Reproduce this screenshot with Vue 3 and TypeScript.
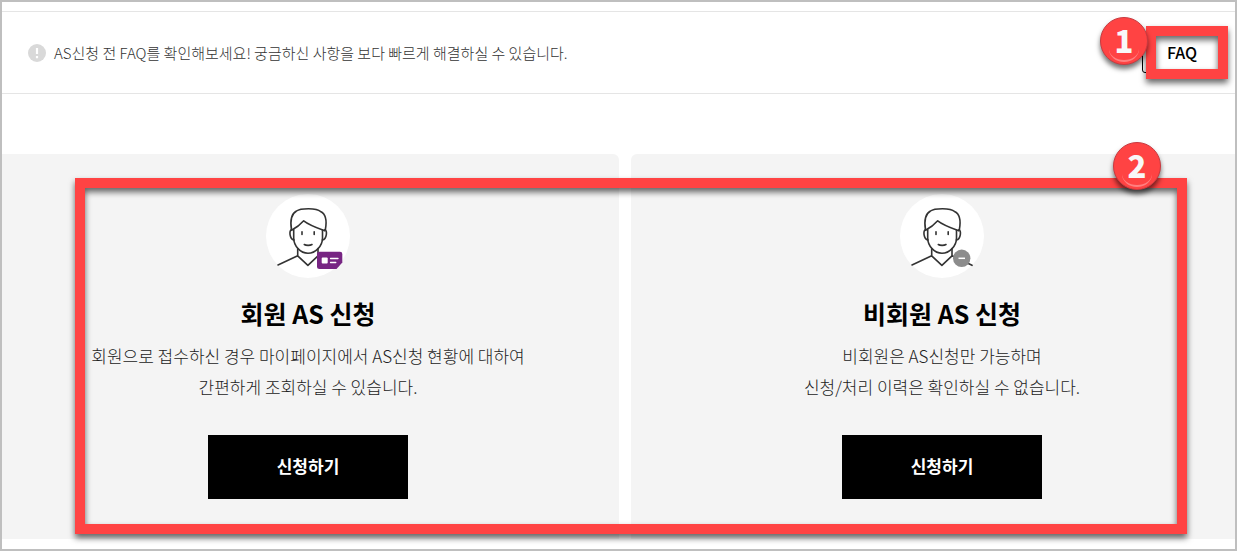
<script setup lang="ts">
interface ServiceCard {
  id: string
  title: string
  lines: string[]
  badge: 'member' | 'guest'
}

const cards: ServiceCard[] = [
  {
    id: 'member',
    title: '회원 AS 신청',
    lines: ['회원으로 접수하신 경우 마이페이지에서 AS신청 현황에 대하여', '간편하게 조회하실 수 있습니다.'],
    badge: 'member',
  },
  {
    id: 'guest',
    title: '비회원 AS 신청',
    lines: ['비회원은 AS신청만 가능하며', '신청/처리 이력은 확인하실 수 없습니다.'],
    badge: 'guest',
  },
]
</script>

<template>
  <main class="page">
    <section class="notice">
      <svg class="notice-icon" viewBox="0 0 18 18" aria-hidden="true">
        <circle cx="9" cy="9" r="9" fill="#d9d9d9" />
        <path d="M9 4V10M9 12v2.200" stroke="#fff" stroke-width="2.200" />
      </svg>
      <p class="notice-text">AS신청 전 FAQ를 확인해보세요! 궁금하신 사항을 보다 빠르게 해결하실 수 있습니다.</p>
      <div class="faq">
        <a class="faq-link" href="#faq">FAQ</a>
        <div class="mark-frame faq-frame"></div>
        <span class="mark-badge faq-badge">1</span>
      </div>
    </section>

    <section class="services">
      <div class="cards">
        <article v-for="card in cards" :key="card.id" class="card">
          <svg class="avatar" viewBox="0 0 84 84" aria-hidden="true">
            <circle cx="42" cy="42" r="42" fill="#fff" />
            <g fill="none" stroke="#333" stroke-width="1.6" stroke-linecap="round" stroke-linejoin="round">
              <path d="M25.5 36C24 27 25 20 30.500 17C33 15 37 14.700 42.500 14.700C48 14.700 52 15 54.500 17.500C60 20 61 27 59.300 36" />
              <path d="M25.500 36.300C30 34 34 31 37.700 26.800C43 31 50 33.500 58.800 36.800" />
              <path d="M27.700 35.500V44C27.700 52 34.500 59.300 42 59.300S56.500 52 56.500 44V36" />
              <path d="M25.500 35.800C23 36 23.300 45 28 46M58.800 35.800C61.500 36 61 45 56.400 46" />
              <path d="M31.700 54.500V61.800L12 71M31.700 61.800L41.900 71.300L52 61.800V54.500M52 61.800L72 71.300" />
              <path d="M36 37.800V40.500M48.200 37.800V40.500" />
              <path d="M38.300 50.500C40 51.600 44.200 51.600 46 50.500" />
            </g>
            <g v-if="card.badge === 'member'">
              <path d="M53.500 57.700H74Q76.300 57.700 76.300 60V68.500L70.500 75H53.500Q51 75 51 72.500V60.200Q51 57.700 53.500 57.700Z" fill="#772583" />
              <rect x="55.700" y="63.500" width="6" height="6" rx="1" fill="#fff" />
              <path d="M64.500 64.500H72M64.500 68.500H69.800" stroke="#fff" stroke-width="1.300" stroke-linecap="round" />
            </g>
            <g v-else>
              <circle cx="61.700" cy="64.300" r="8.700" fill="#8c8c8c" />
              <path d="M58.500 64.300H65" stroke="#fff" stroke-width="1.500" />
            </g>
          </svg>
          <h2 class="card-title">{{ card.title }}</h2>
          <p class="card-text">
            <span v-for="line in card.lines" :key="line" class="card-line">{{ line }}</span>
          </p>
          <button class="apply" type="button">신청하기</button>
        </article>
      </div>
      <div class="mark-frame services-frame"></div>
      <span class="mark-badge services-badge">2</span>
    </section>
  </main>
</template>

<style>
body {
  margin: 0;
}
</style>

<style scoped>
.page {
  box-sizing: border-box;
  padding: 9px 0 10px;
  overflow: hidden;
  border: 2px solid #bfbfbf;
  background: #fff;
  color: #000;
  font-family: "Noto Sans CJK KR", "Noto Sans", sans-serif;
}

.notice {
  display: flex;
  align-items: center;
  height: 81px;
  padding: 0 13px 0 26px;
  border-top: 1px solid #e5e5e5;
  border-bottom: 1px solid #e5e5e5;
}

.notice-icon {
  width: 18px;
  height: 18px;
  margin-right: 8px;
}

.notice-text {
  flex: 1;
  margin: 0;
  color: #333;
  font-size: 15px;
  font-weight: 300;
  line-height: 24px;
}

.faq {
  position: relative;
}

.faq-link {
  display: block;
  box-sizing: border-box;
  width: 80px;
  padding-bottom: 2px;
  border: 1px solid #000;
  border-radius: 3px;
  color: #000;
  font-size: 16px;
  font-weight: 500;
  line-height: 36px;
  text-align: center;
  text-decoration: none;
}

.services {
  position: relative;
  margin-top: 60px;
}

.cards {
  display: grid;
  grid-template-columns: 1fr 1fr;
  gap: 12px;
  margin: 0 -18px 0 -5px;
}

.card {
  display: flex;
  flex-direction: column;
  align-items: center;
  padding: 40px 0;
  border-radius: 6px 6px 0 0;
  background: #f4f4f4;
}

.avatar {
  width: 84px;
  height: 84px;
}

.card-title {
  margin: 15px 0 0;
  font-size: 25px;
  font-weight: 700;
  line-height: 40px;
}

.card-text {
  margin: 7px 0 33px;
  color: #222;
  font-size: 17px;
  font-weight: 300;
  line-height: 31px;
  text-align: center;
}

.card-line {
  display: block;
}

.apply {
  width: 200px;
  height: 64px;
  padding: 0 0 4px;
  border: 0;
  background: #000;
  color: #fff;
  font-family: inherit;
  font-size: 17px;
  font-weight: 700;
}

.mark-frame {
  position: absolute;
  border: 10px solid #ff4343;
  filter: drop-shadow(0 4px 3px rgba(0, 0, 0, 0.6));
  pointer-events: none;
}

.faq-frame {
  inset: -7px -6px -6px 4px;
}

.services-frame {
  inset: 24px 48px 5px 73px;
}

.mark-badge {
  position: absolute;
  box-sizing: border-box;
  width: 48px;
  height: 48px;
  border: 1px solid #c93a40;
  border-radius: 50%;
  background: #ff4343;
  box-shadow: 0 4px 5px rgba(0, 0, 0, 0.55);
  color: #f8f8f8;
  font-size: 31px;
  font-weight: 900;
  line-height: 44px;
  text-align: center;
  pointer-events: none;
}

.mark-badge::after {
  position: absolute;
  right: 8px;
  bottom: 2px;
  left: 8px;
  height: 24px;
  border-bottom: 2px solid #ff8080;
  border-radius: 50%;
  content: "";
}

.faq-badge {
  top: -16px;
  left: -42px;
}

.services-badge {
  top: -12px;
  right: 74px;
}
</style>
